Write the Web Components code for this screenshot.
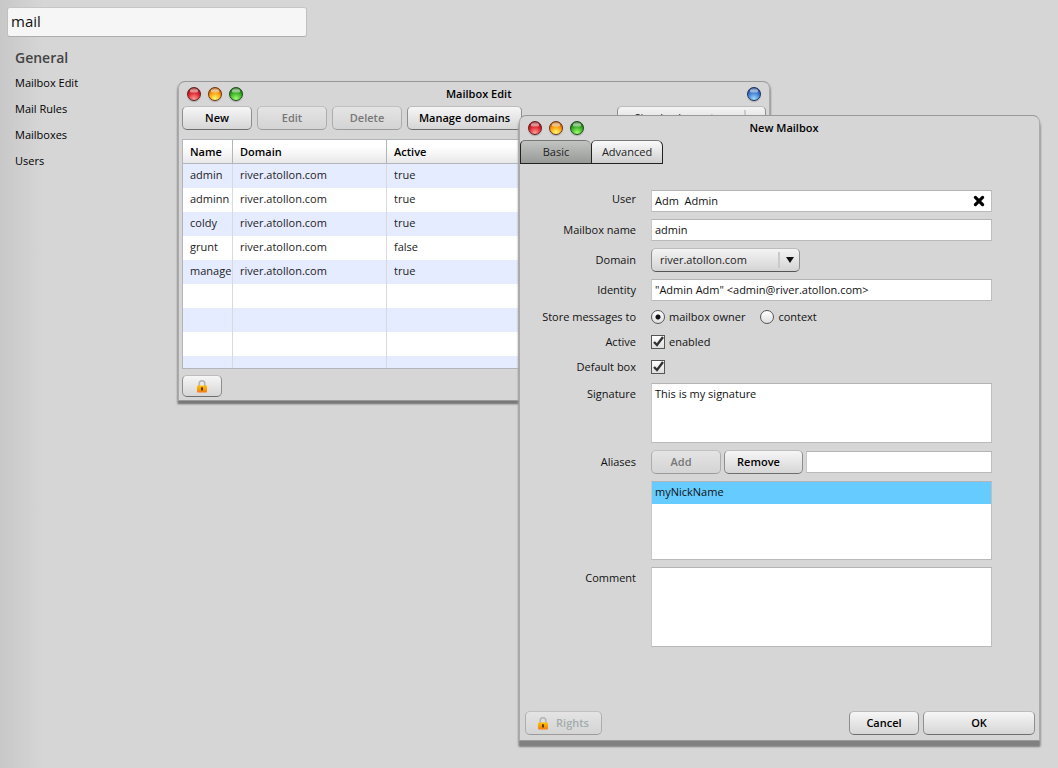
<!DOCTYPE html>
<html lang="en">
<head>
<meta charset="utf-8">
<title>Mailbox Edit</title>
<style>
html, body { height: 100%; }
body { margin: 0; overflow: hidden; background: #d6d6d6; color: #111; font: 11px/18px "Open Sans", "Noto Sans", sans-serif; }
</style>
</head>
<body>
<mail-desktop></mail-desktop>
<script>
const define = (name, html, init) => {
  const template = document.createElement('template');
  template.innerHTML = '<style>*, *::before, *::after { box-sizing: border-box; } [hidden] { display: none !important; }</style>' + html;
  customElements.define(name, class extends HTMLElement {
    constructor() {
      super();
      this.attachShadow({ mode: 'open' }).append(template.content.cloneNode(true));
    }
    connectedCallback() { if (init) init(this, this.shadowRoot); }
  });
};

define('lock-icon', `
<style>:host { display: block; width: 10px; height: 13px; } svg { display: block; }</style>
<svg width="10" height="13" viewBox="0 0 10 13" aria-hidden="true">
  <defs><linearGradient id="g" x1="0" y1="0" x2="0" y2="1"><stop offset="0" stop-color="#ffc400"/><stop offset="1" stop-color="#f57a10"/></linearGradient></defs>
  <path d="M2.2 6.5V3.6a2.8 2.8 0 0 1 5.6 0v2.9" fill="none" stroke="#b4b4b4" stroke-width="1.6"/>
  <rect x="0" y="5.5" width="10" height="7" rx="1" fill="url(#g)"/>
  <path d="M4 7.3h2v3.2h-2z" fill="#5a3a08"/>
</svg>`);

define('window-orb', `
<style>
:host { display: block; width: 14px; height: 14px; }
button { display: block; position: relative; width: 14px; height: 14px; padding: 0; border: 1px solid var(--rim); border-radius: 50%; overflow: hidden;
  background: radial-gradient(circle at 50% 90%, var(--light) 0, var(--mid) 50%, var(--dark) 100%); box-shadow: 0 1px 1px #aaa; }
button::before { content: ""; position: absolute; left: 2px; right: 2px; top: 0; height: 5px; border-radius: 5px 5px 3px 3px; background: linear-gradient(#fff4, #fff9 60%, #fff2); }
:host, :host([tone=red]) { --rim: #5c2020; --light: #ff9c98; --mid: #e02830; --dark: #6c0404; }
:host([tone=amber]) { --rim: #6b3414; --light: #ffff70; --mid: #ffa010; --dark: #803000; }
:host([tone=green]) { --rim: #1c4a1c; --light: #a4ff70; --mid: #3ab028; --dark: #044004; }
:host([tone=blue]) { --rim: #1c2f58; --light: #a0dcff; --mid: #4480d4; --dark: #0c2464; }
</style>
<button type="button"></button>`, (host, root) => root.querySelector('button').setAttribute('aria-label', host.getAttribute('label')));

define('push-button', `
<style>
:host { display: block; }
button { display: flex; align-items: center; justify-content: center; gap: 8px; width: 100%; height: 24px; padding: 0 12px;
  font: 600 11px/18px "Open Sans", "Noto Sans", sans-serif; color: #000; white-space: nowrap;
  border: 1px solid; border-color: #bcbcbc #8e8e8e #6e6e6e; border-radius: 5px; background: linear-gradient(#f6f6f6, #d6d6d6); }
:host([small]) button { height: 22px; padding: 0; }
button:disabled { color: #777; border-color: #c0c0c0 #adadad #9b9b9b; background: linear-gradient(#e4e4e4, #d4d4d4); }
:host([faint]) button:disabled { color: #a2acac; }
:host([lead]) button { padding-right: 22px; }
</style>
<button type="button"><slot></slot></button>`, (host, root) => {
  const b = root.querySelector('button');
  b.disabled = host.hasAttribute('disabled');
  if (host.hasAttribute('label')) b.setAttribute('aria-label', host.getAttribute('label'));
});

define('drop-down', `
<style>
:host { display: grid; width: 149px; }
select, span { grid-area: 1 / 1; }
select { appearance: none; width: 100%; height: 24px; margin: 0; padding: 0 28px 0 8px; font: 11px/18px "Open Sans", "Noto Sans", sans-serif; color: #222;
  border: 1px solid; border-color: #bcbcbc #8e8e8e #555; border-radius: 5px; background: linear-gradient(#f4f4f4, #d4d4d4); }
:host([inset]) select { padding-left: 16px; }
span { justify-self: end; align-self: center; display: flex; align-items: center; justify-content: center; width: 22px; height: 16px; border-left: 2px solid #cacaca; pointer-events: none; }
svg { display: block; }
</style>
<select><option></option></select>
<span><svg width="8" height="6" viewBox="0 0 8 6" aria-hidden="true"><path d="M0 0h8L4 6z" fill="#111"/></svg></span>`, (host, root) => {
  root.querySelector('option').textContent = host.getAttribute('value');
  root.querySelector('select').setAttribute('aria-label', host.getAttribute('label'));
});

define('desk-window', `
<style>
:host { display: block; }
section { display: flex; flex-direction: column; border: 1px solid; border-color: #999 #aaa #999; border-radius: 7px 7px 0 0; background: #d6d6d6; box-shadow: var(--shade); }
header { display: grid; grid-template-columns: 1fr auto 1fr; align-items: center; height: 24px; padding: 0 8px; }
h2 { margin: 0; padding-left: 9px; font: 600 11px/18px "Open Sans", "Noto Sans", sans-serif; color: #000; }
.orbs { display: flex; gap: 7px; }
.end { justify-self: end; }
</style>
<section>
  <header>
    <div class="orbs">
      <window-orb tone="red" label="Close"></window-orb>
      <window-orb tone="amber" label="Minimise"></window-orb>
      <window-orb tone="green" label="Maximise"></window-orb>
    </div>
    <h2></h2>
    <window-orb class="end" tone="blue" label="Pin"></window-orb>
  </header>
  <slot></slot>
</section>`, (host, root) => {
  root.querySelector('h2').textContent = host.getAttribute('heading');
  root.querySelector('.end').hidden = !host.hasAttribute('pin');
});

define('side-menu', `
<style>
:host { display: block; box-sizing: border-box; width: 100%; max-width: 314px; padding: 7px; }
input { display: block; width: 100%; height: 30px; padding: 0 3px 2px; font: 15px/20px "Open Sans", "Noto Sans", sans-serif; color: #111; background: #f6f6f6;
  border: 1px solid; border-color: #c6c6c6 #c0c0c0 #adadad; border-radius: 3px; }
h1 { margin: 11px 8px 2px; font: 600 14px/20px "Open Sans", "Noto Sans", sans-serif; color: #444; }
nav { display: flex; flex-direction: column; align-items: flex-start; padding: 0 8px; }
a { line-height: 26px; color: #000; text-decoration: none; }
</style>
<input type="text" value="mail" aria-label="Search">
<h1>General</h1>
<nav><a href="#edit">Mailbox Edit</a><a href="#rules">Mail Rules</a><a href="#boxes">Mailboxes</a><a href="#users">Users</a></nav>`);

define('mailbox-table', `
<style>
:host { display: block; box-sizing: border-box; height: 230px; overflow: hidden; border: 1px solid #b2b6ba; background: #fff; }
table { width: 100%; table-layout: fixed; border-collapse: separate; border-spacing: 0; }
.name { width: 50px; } .domain { width: 154px; }
th, td { height: 24px; padding: 0 0 0 7px; line-height: 18px; text-align: left; white-space: nowrap; overflow: hidden; }
th { font-weight: 600; color: #000; background: linear-gradient(#fff 30%, #e8e8e8); border-bottom: 1px solid #b2b6ba; border-right: 1px solid #b2b6ba; }
td { padding-bottom: 2px; color: #222; border-right: 1px solid #d8dade; }
th:last-child, td:last-child { border-right: 0; }
tbody tr:nth-child(odd) { background: #e6ecff; }
</style>
<table>
  <colgroup><col class="name"><col class="domain"><col></colgroup>
  <thead><tr><th>Name</th><th>Domain</th><th>Active</th></tr></thead>
  <tbody></tbody>
</table>`, (host, root) => {
  const rows = [['admin', 'true'], ['adminn', 'true'], ['coldy', 'true'], ['grunt', 'false'], ['manage', 'true'], [], [], [], []];
  root.querySelector('tbody').innerHTML = rows.map(([name = '', active = '']) =>
    `<tr><td>${name}</td><td>${name && 'river.atollon.com'}</td><td>${active}</td></tr>`).join('');
});

define('mailbox-list', `
<style>
:host { display: flex; flex-direction: column; padding: 0 3px 3px; }
.bar { display: flex; gap: 5px; margin-bottom: 9px; }
.b { width: 70px; } .wide { width: 115px; } drop-down { margin-left: auto; }
.foot { width: 40px; margin-top: 6px; }
</style>
<div class="bar">
  <push-button class="b">New</push-button>
  <push-button class="b" disabled>Edit</push-button>
  <push-button class="b" disabled>Delete</push-button>
  <push-button class="wide">Manage domains</push-button>
  <drop-down inset value="Simple element" label="View"></drop-down>
</div>
<mailbox-table></mailbox-table>
<push-button class="foot" small label="Rights"><lock-icon></lock-icon></push-button>`);

define('mailbox-form', `
<style>
:host { display: block; }
.tabs { display: flex; }
.tabs button { width: 72px; height: 24px; padding: 0; font: 11px/18px "Open Sans", "Noto Sans", sans-serif; color: #222; border: 1px solid #222; border-top-color: #777; border-radius: 5px 6px 0 0; background: linear-gradient(#fafafa, #cfcfcf); }
.tabs button[aria-selected=true] { width: 71px; border-right: 0; background: linear-gradient(#c2c4c2, #989a98); }
form { display: grid; grid-template-columns: 116px 1fr; column-gap: 15px; row-gap: 7px; padding: 26px 47px 64px 0; }
.lab { align-self: start; text-align: right; line-height: 22px; color: #111; }
.mid { align-self: center; line-height: 18px; }
.top { align-self: start; }
.line { grid-column: 2; display: flex; align-items: center; min-width: 0; }
.h18 { height: 18px; } .h24 { height: 24px; }
input[type=text], textarea, .list { display: block; width: 100%; margin: 0; padding: 0 3px; font: 11px/18px "Open Sans", "Noto Sans", sans-serif; color: #111; background: #fff;
  border: 1px solid; border-color: #b2b4b6 #bcbec0 #b8babc #c8c8c8; border-radius: 0; outline: 0; }
input[type=text] { height: 22px; padding-bottom: 2px; }
textarea { padding-top: 1px; resize: none; overflow: hidden; }
.s { height: 60px; } .c { height: 80px; }
.list { height: 79px; padding: 0; list-style: none; }
.list li { padding: 0 3px 2px; line-height: 20px; background: #66ccff; }
.user { display: grid; grid-column: 2; }
.user > * { grid-area: 1 / 1; }
.x { justify-self: end; align-self: center; margin-right: 7px; padding: 0; border: 0; background: none; }
svg { display: block; }
.opt { display: flex; align-items: center; gap: 4px; margin-right: 15px; }
input[type=radio], input[type=checkbox] { appearance: none; width: 14px; height: 14px; margin: 0; border: 1px solid #555; background: linear-gradient(#fff, #dedede); }
input[type=radio] { border-radius: 50%; }
input[type=radio]:checked { background: radial-gradient(circle, #111 0 2px, #1110 3px), linear-gradient(#fff, #dedede); }
.tick { display: grid; }
.tick > * { grid-area: 1 / 1; }
.tick svg { pointer-events: none; }
.add { width: 70px; margin-right: 3px; } .rem { width: 79px; margin-right: 3px; }
.line input.alias { flex: 1; width: 0; }
footer { display: flex; gap: 4px; padding: 0 4px 5px 5px; }
.rights { width: 77px; margin-right: auto; } .cancel { width: 70px; } .ok { width: 112px; }
</style>
<div class="tabs" role="tablist"><button type="button" role="tab" aria-selected="true">Basic</button><button type="button" role="tab">Advanced</button></div>
<form>
  <label class="lab mid top" for="user">User</label>
  <div class="user"><input type="text" id="user" value="Adm  Admin">
    <button class="x" type="button" aria-label="Clear user"><svg width="12" height="12" viewBox="0 0 12 12"><path d="M2.4 2.4l7.2 7.2M9.6 2.4l-7.2 7.2" stroke="#000" stroke-width="3.2" stroke-linecap="round"/></svg></button></div>
  <label class="lab mid" for="name">Mailbox name</label><input type="text" id="name" value="admin">
  <span class="lab mid">Domain</span><drop-down value="river.atollon.com" label="Domain"></drop-down>
  <label class="lab mid" for="identity">Identity</label><input type="text" id="identity" value="&quot;Admin Adm&quot; &lt;admin@river.atollon.com&gt;">
  <span class="lab mid">Store messages to</span>
  <div class="line h18"><label class="opt"><input type="radio" name="store" checked>mailbox owner</label><label class="opt"><input type="radio" name="store">context</label></div>
  <label class="lab mid" for="active">Active</label>
  <div class="line h18"><label class="opt"><span class="tick"><input type="checkbox" id="active" checked><svg width="14" height="14" viewBox="0 0 14 14"><path d="M3 7l3 3 6-8" fill="none" stroke="#333" stroke-width="2.4"/></svg></span>enabled</label></div>
  <label class="lab mid" for="default">Default box</label>
  <div class="line h18"><span class="tick"><input type="checkbox" id="default" checked><svg width="14" height="14" viewBox="0 0 14 14"><path d="M3 7l3 3 6-8" fill="none" stroke="#333" stroke-width="2.4"/></svg></span></div>
  <label class="lab" for="signature">Signature</label><textarea class="s" id="signature">This is my signature</textarea>
  <label class="lab mid" for="alias">Aliases</label>
  <div class="line h24"><push-button class="add" lead disabled>Add</push-button><push-button class="rem" lead>Remove</push-button><input class="alias" type="text" id="alias"></div>
  <div class="line"><ul class="list"><li>myNickName</li></ul></div>
  <label class="lab" for="comment">Comment</label><textarea class="c" id="comment"></textarea>
</form>
<footer>
  <push-button class="rights" faint disabled><lock-icon></lock-icon>Rights</push-button>
  <push-button class="cancel">Cancel</push-button>
  <push-button class="ok">OK</push-button>
</footer>`);

define('mail-desktop', `
<style>
:host { display: block; position: relative; height: 100vh; overflow: hidden; background: linear-gradient(90deg, #c8c8c8, #d6d6d6 44px); }
desk-window { position: absolute; }
.back { left: 178px; top: 81px; width: 56%; --shade: 0 3px 2px #777, 0 2px 2px 1px #aaa; }
.front { left: 519px; top: 115px; right: 18px; --shade: 0 6px 2px #808080, 0 4px 2px 1px #aaa; }
</style>
<side-menu></side-menu>
<desk-window class="back" heading="Mailbox Edit" pin><mailbox-list></mailbox-list></desk-window>
<desk-window class="front" heading="New Mailbox"><mailbox-form></mailbox-form></desk-window>`);
</script>
</body>
</html>
